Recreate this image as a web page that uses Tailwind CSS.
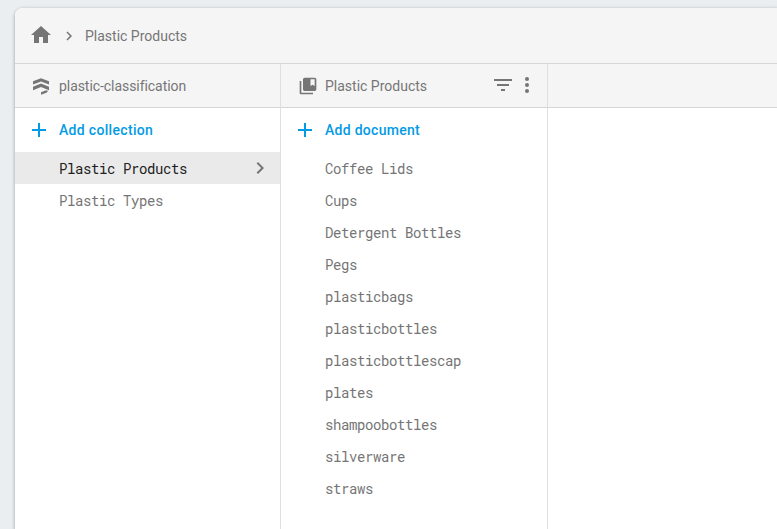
<!DOCTYPE html>
<html lang="en">
<head>
<meta charset="utf-8">
<title>Plastic Products</title>
<script src="https://cdn.jsdelivr.net/npm/@tailwindcss/browser@4"></script>
</head>
<body class="h-screen overflow-hidden bg-[#eaeef1] pl-[15px] pt-2 font-[Roboto,sans-serif] text-sm text-[#757575]">
<main class="flex h-full flex-col overflow-hidden rounded-tl-lg bg-white shadow-[0_1px_3px_1px_rgba(60,64,67,0.28)]">
  <nav class="flex h-14 shrink-0 items-center border-b border-[#d6d6d6] bg-[#f5f5f5] pl-3.5">
    <svg class="mb-px size-6 fill-[#757575]" viewBox="0 0 24 24"><path d="M10 20v-6h4v6h5v-8h3L12 3 2 12h3v8z"/></svg>
    <svg class="ml-[7px] size-[18px] fill-[#757575]" viewBox="0 0 24 24"><path d="M10 6 8.590 7.410 13.170 12l-4.580 4.590L10 18l6-6z"/></svg>
    <span class="ml-[7px]">Plastic Products</span>
  </nav>
  <div class="flex min-h-0 flex-1">
    <section class="w-[266px] shrink-0 border-r border-[#dfdfdf]">
      <header class="flex h-11 items-center border-b border-[#d6d6d6] bg-[#f5f5f5] pl-[17px]">
        <svg class="size-[18px] fill-[#757575]" viewBox="0 0 18 18"><path d="M9 1.200 17 4.200v3.400L9 4.600 1 7.600V4.200zM9 6.600l8 3.100v3.500L9 10.100l-8 3.100V9.700zM9 15.300l5.200-2.100 1.900.8-1.700 1.700L9 17.700z"/></svg>
        <span class="ml-[9px] tracking-[-0.06px]">plastic-classification</span>
      </header>
      <div class="flex h-11 items-center pl-3 font-medium tracking-[0.32px] text-[#039be5]">
        <svg class="size-6 fill-current" viewBox="0 0 24 24"><path d="M19 13h-6v6h-2v-6H5v-2h6V5h2v6h6z"/></svg>
        <span class="ml-2">Add collection</span>
      </div>
      <ul class="font-['Roboto_Mono','Liberation_Mono',monospace] tracking-[-0.4px]">
        <li class="flex h-8 items-center justify-between bg-[#eaeaea] pl-11 pr-2 text-[#212121]"><span class="pt-0.5">Plastic Products</span>
          <svg class="size-6 fill-[#757575]" viewBox="0 0 24 24"><path d="M10 6 8.590 7.410 13.170 12l-4.580 4.590L10 18l6-6z"/></svg></li>
        <li class="flex h-8 items-center pl-11 pt-0.5">Plastic Types</li>
      </ul>
    </section>
    <section class="w-[267px] shrink-0 border-r border-[#dfdfdf]">
      <header class="flex h-11 items-center border-b border-[#d6d6d6] bg-[#f5f5f5] pl-[17px] pr-2">
        <svg class="size-5 fill-[#757575]" viewBox="0 0 24 24"><path d="M4 6H2v14c0 1.100.9 2 2 2h14v-2H4zM20 2H8c-1.100 0-2 .9-2 2v12c0 1.100.9 2 2 2h12c1.100 0 2-.9 2-2V4c0-1.100-.9-2-2-2zm0 10-2.500-1.500L15 12V4h5z"/></svg>
        <span class="ml-[7px]">Plastic Products</span>
        <div class="ml-auto flex pb-px">
          <svg class="size-6 fill-[#757575]" viewBox="0 0 24 24"><path d="M10 18h4v-2h-4zM3 6v2h18V6zm3 7h12v-2H6z"/></svg>
          <svg class="size-6 fill-[#757575]" viewBox="0 0 24 24"><circle cx="12" cy="6" r="2"/><circle cx="12" cy="12" r="2"/><circle cx="12" cy="18" r="2"/></svg>
        </div>
      </header>
      <div class="flex h-11 items-center pl-3 font-medium tracking-[0.28px] text-[#039be5]">
        <svg class="size-6 fill-current" viewBox="0 0 24 24"><path d="M19 13h-6v6h-2v-6H5v-2h6V5h2v6h6z"/></svg>
        <span class="ml-2">Add document</span>
      </div>
      <ul class="pl-11 pt-px font-['Roboto_Mono','Liberation_Mono',monospace] leading-8 tracking-[-0.4px]">
        <li>Coffee Lids</li>
        <li>Cups</li>
        <li>Detergent Bottles</li>
        <li>Pegs</li>
        <li>plasticbags</li>
        <li>plasticbottles</li>
        <li>plasticbottlescap</li>
        <li>plates</li>
        <li>shampoobottles</li>
        <li>silverware</li>
        <li>straws</li>
      </ul>
    </section>
    <section class="flex-1">
      <header class="h-11 border-b border-[#d6d6d6] bg-[#f5f5f5]"></header>
    </section>
  </div>
</main>
</body>
</html>
